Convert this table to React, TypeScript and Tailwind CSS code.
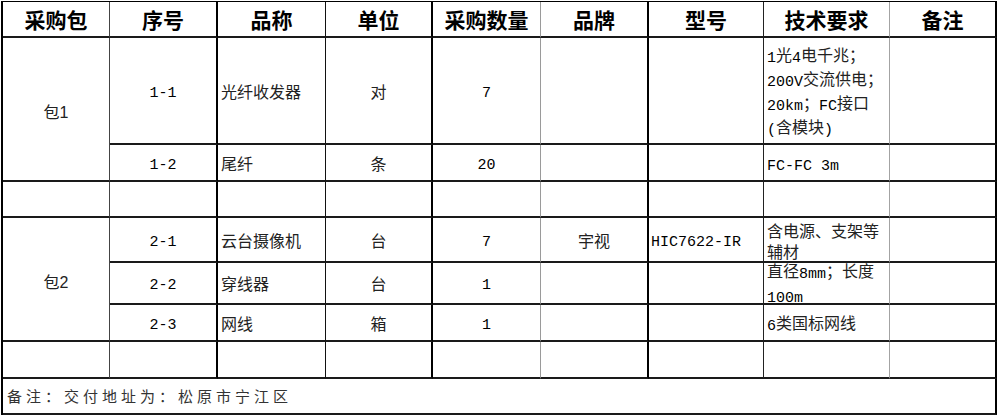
import React from "react"

type Item = {
  no: string
  name: string
  unit: string
  qty: string
  brand?: string
  model?: string
  tech: string[]
}

const colBorder = [
  "border-r border-r-[#444444]",
  "border-r-2 border-r-black",
  "border-r border-r-[#111111]",
  "border-r-2 border-r-black",
  "border-r border-r-[#9a9a9a]",
  "border-r-2 border-r-black",
  "border-r border-r-[#222222]",
  "border-r border-r-[#a3a3a3]",
  "border-r-2 border-r-black",
]

const headers = ["采购包", "序号", "品称", "单位", "采购数量", "品牌", "型号", "技术要求", "备注"]

const groups: { pkg: string; items: Item[] }[] = [
  {
    pkg: "包1",
    items: [
      {
        no: "1-1",
        name: "光纤收发器",
        unit: "对",
        qty: "7",
        tech: ["1光4电千兆；", "200V交流供电；", "20km；FC接口", "(含模块)"],
      },
      { no: "1-2", name: "尾纤", unit: "条", qty: "20", tech: ["FC-FC 3m"] },
    ],
  },
  {
    pkg: "包2",
    items: [
      {
        no: "2-1",
        name: "云台摄像机",
        unit: "台",
        qty: "7",
        brand: "宇视",
        model: "HIC7622-IR",
        tech: ["含电源、支架等", "辅材"],
      },
      { no: "2-2", name: "穿线器", unit: "台", qty: "1", tech: ["直径8mm；长度", "100m"] },
      { no: "2-3", name: "网线", unit: "箱", qty: "1", tech: ["6类国标网线"] },
    ],
  },
]

const rowLine = "border-b-2 border-b-[#1a1a1a]"

// 半角字符用等宽字体，模仿宋体的半角宽度
function Mixed({ text }: { text?: string }) {
  if (!text) return null
  const parts = text.split(/([\x20-\x7e]+)/).filter(Boolean)
  return (
    <div>
      {parts.map((p, i) =>
        /^[\x20-\x7e]+$/.test(p) ? (
          <span
            key={i}
            className="relative top-[1px] font-['Liberation_Mono',monospace] text-[15px] text-black whitespace-pre"
          >
            {p}
          </span>
        ) : (
          <span key={i}>{p}</span>
        )
      )}
    </div>
  )
}

function Cell({
  col,
  className = "",
  children,
}: {
  col: number
  className?: string
  children?: React.ReactNode
}) {
  return <div className={`${colBorder[col]} ${rowLine} flex items-center ${className}`}>{children}</div>
}

function EmptyRow() {
  return (
    <>
      {colBorder.map((_, i) => (
        <Cell key={i} col={i} />
      ))}
    </>
  )
}

export default function App() {
  return (
    <div className="w-[1000px] h-[418px] bg-white overflow-hidden">
      <div className="mt-px ml-px w-fit border-l-2 border-l-black border-t border-t-black grid grid-cols-[107px_108px_108px_107px_108px_108px_115px_126px_107px] grid-rows-[36px_107px_37px_36px_45px_42px_37px_37px_36px] font-['Noto_Sans_CJK_SC',sans-serif] text-[16px] text-[#222222]">
        {/* 表头 */}
        {headers.map((h, i) => (
          <Cell key={h} col={i} className="justify-center pt-[2px] text-[21px] font-bold text-black">
            {h}
          </Cell>
        ))}

        {groups.map((g, gi) => (
          <React.Fragment key={g.pkg}>
            {g.items.map((it, idx) => (
              <React.Fragment key={it.no}>
                {idx === 0 && (
                  <Cell
                    col={0}
                    className={`justify-center pt-[7px] font-['Liberation_Sans','Noto_Sans_CJK_SC',sans-serif] ${
                      g.items.length === 3 ? "row-span-3" : "row-span-2"
                    }`}
                  >
                    {g.pkg}
                  </Cell>
                )}
                <Cell col={1} className="justify-center">
                  <Mixed text={it.no} />
                </Cell>
                <Cell col={2} className="pl-[3px]">
                  {it.name}
                </Cell>
                <Cell col={3} className="justify-center">
                  {it.unit}
                </Cell>
                <Cell col={4} className="justify-center">
                  <Mixed text={it.qty} />
                </Cell>
                <Cell col={5} className="justify-center">
                  {it.brand}
                </Cell>
                <Cell col={6} className="pl-[2px]">
                  <Mixed text={it.model} />
                </Cell>
                <Cell col={7} className="pl-[3px]">
                  <div className="leading-[21px] pt-[2px]">
                    {it.tech.map((t) => (
                      <Mixed key={t} text={t} />
                    ))}
                  </div>
                </Cell>
                <Cell col={8} />
              </React.Fragment>
            ))}
            <EmptyRow key={`empty-${gi}`} />
          </React.Fragment>
        ))}

        {/* 备注 */}
        <div
          className={`col-span-9 ${rowLine} border-r-2 border-r-black flex items-center pl-[4px] text-[15px] tracking-[4px] text-[#333333]`}
        >
          备注：交付地址为：松原市宁江区
        </div>
      </div>
    </div>
  )
}
